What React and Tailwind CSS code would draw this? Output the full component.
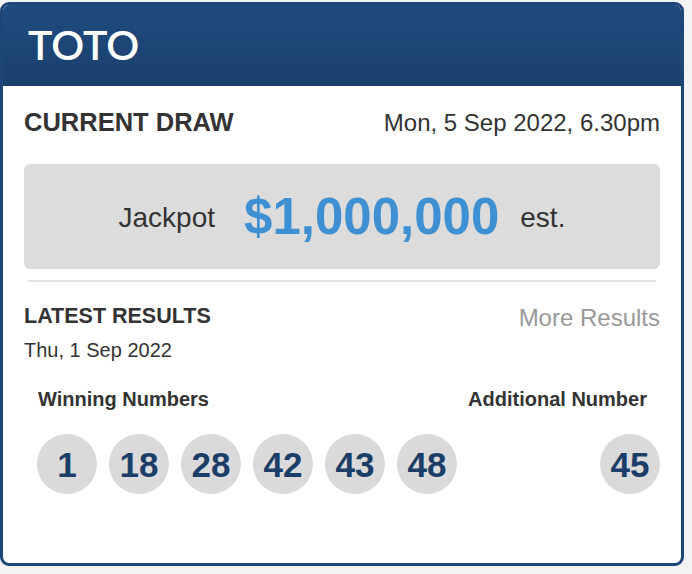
export default function App() {
  const nums = [1, 18, 28, 42, 43, 48];
  return (
    <div className="w-[692px] h-[574px] bg-[#f3f3f5] pt-[2px]" style={{ fontFamily: '"Liberation Sans", Arial, sans-serif' }}>
      <div className="w-[684px] h-[564px] border-[3px] border-[#1d4677] rounded-[9px] overflow-hidden bg-white flex flex-col">
        <div className="h-[81px] bg-gradient-to-b from-[#1f4c80] to-[#1a3f6c] flex items-center pl-[25px]">
          <span className="text-white text-[41px] font-semibold leading-none tracking-[0px] mt-[-2px]" style={{ fontFamily: 'Lato, "Open Sans", sans-serif' }}>TOTO</span>
        </div>
        <div className="px-[21px] flex flex-col">
          <div className="mt-[22px] h-[30px] flex items-center justify-between text-[#333333]">
            <span className="text-[25.5px] font-bold leading-none">CURRENT DRAW</span>
            <span className="text-[24px] leading-none">Mon, 5 Sep 2022, 6.30pm</span>
          </div>
          <div className="mt-[26px] h-[105px] rounded-[6px] bg-[#dcdcdc] flex items-center justify-center">
            <span className="text-[28px] text-[#333333] leading-none mt-[3px]">Jackpot</span>
            <span className="text-[51px] font-bold text-[#3e90d2] leading-none ml-[29px]">$1,000,000</span>
            <span className="text-[28px] text-[#333333] leading-none ml-[21px] mt-[3px]">est.</span>
          </div>
          <div className="mt-[11px] mx-[4px] h-[2px] bg-[#e2e2e2]"></div>
          <div className="mt-[22px] h-[26px] flex items-center justify-between">
            <span className="text-[21.5px] font-bold text-[#333333] leading-none">LATEST RESULTS</span>
            <span className="text-[24px] text-[#999999] leading-none mt-[2px]">More Results</span>
          </div>
          <div className="mt-[8px] h-[24px] flex items-center text-[20px] text-[#333333] leading-none">Thu, 1 Sep 2022</div>
          <div className="mt-[25px] h-[24px] flex items-center justify-between text-[20px] font-bold text-[#333333] leading-none">
            <span className="pl-[14px]">Winning Numbers</span>
            <span className="pr-[13px]">Additional Number</span>
          </div>
          <div className="mt-[23px] flex items-center justify-between">
            <div className="flex gap-[12px] pl-[13px]">
              {nums.map((n) => (
                <div key={n} className="w-[60px] h-[60px] rounded-full bg-[#dadada] flex items-center justify-center text-[35px] font-bold text-[#1b3e68] leading-none">
                  {n}
                </div>
              ))}
            </div>
            <div className="w-[60px] h-[60px] rounded-full bg-[#dadada] flex items-center justify-center text-[35px] font-bold text-[#1b3e68] leading-none">
              45
            </div>
          </div>
        </div>
      </div>
    </div>
  );
}
